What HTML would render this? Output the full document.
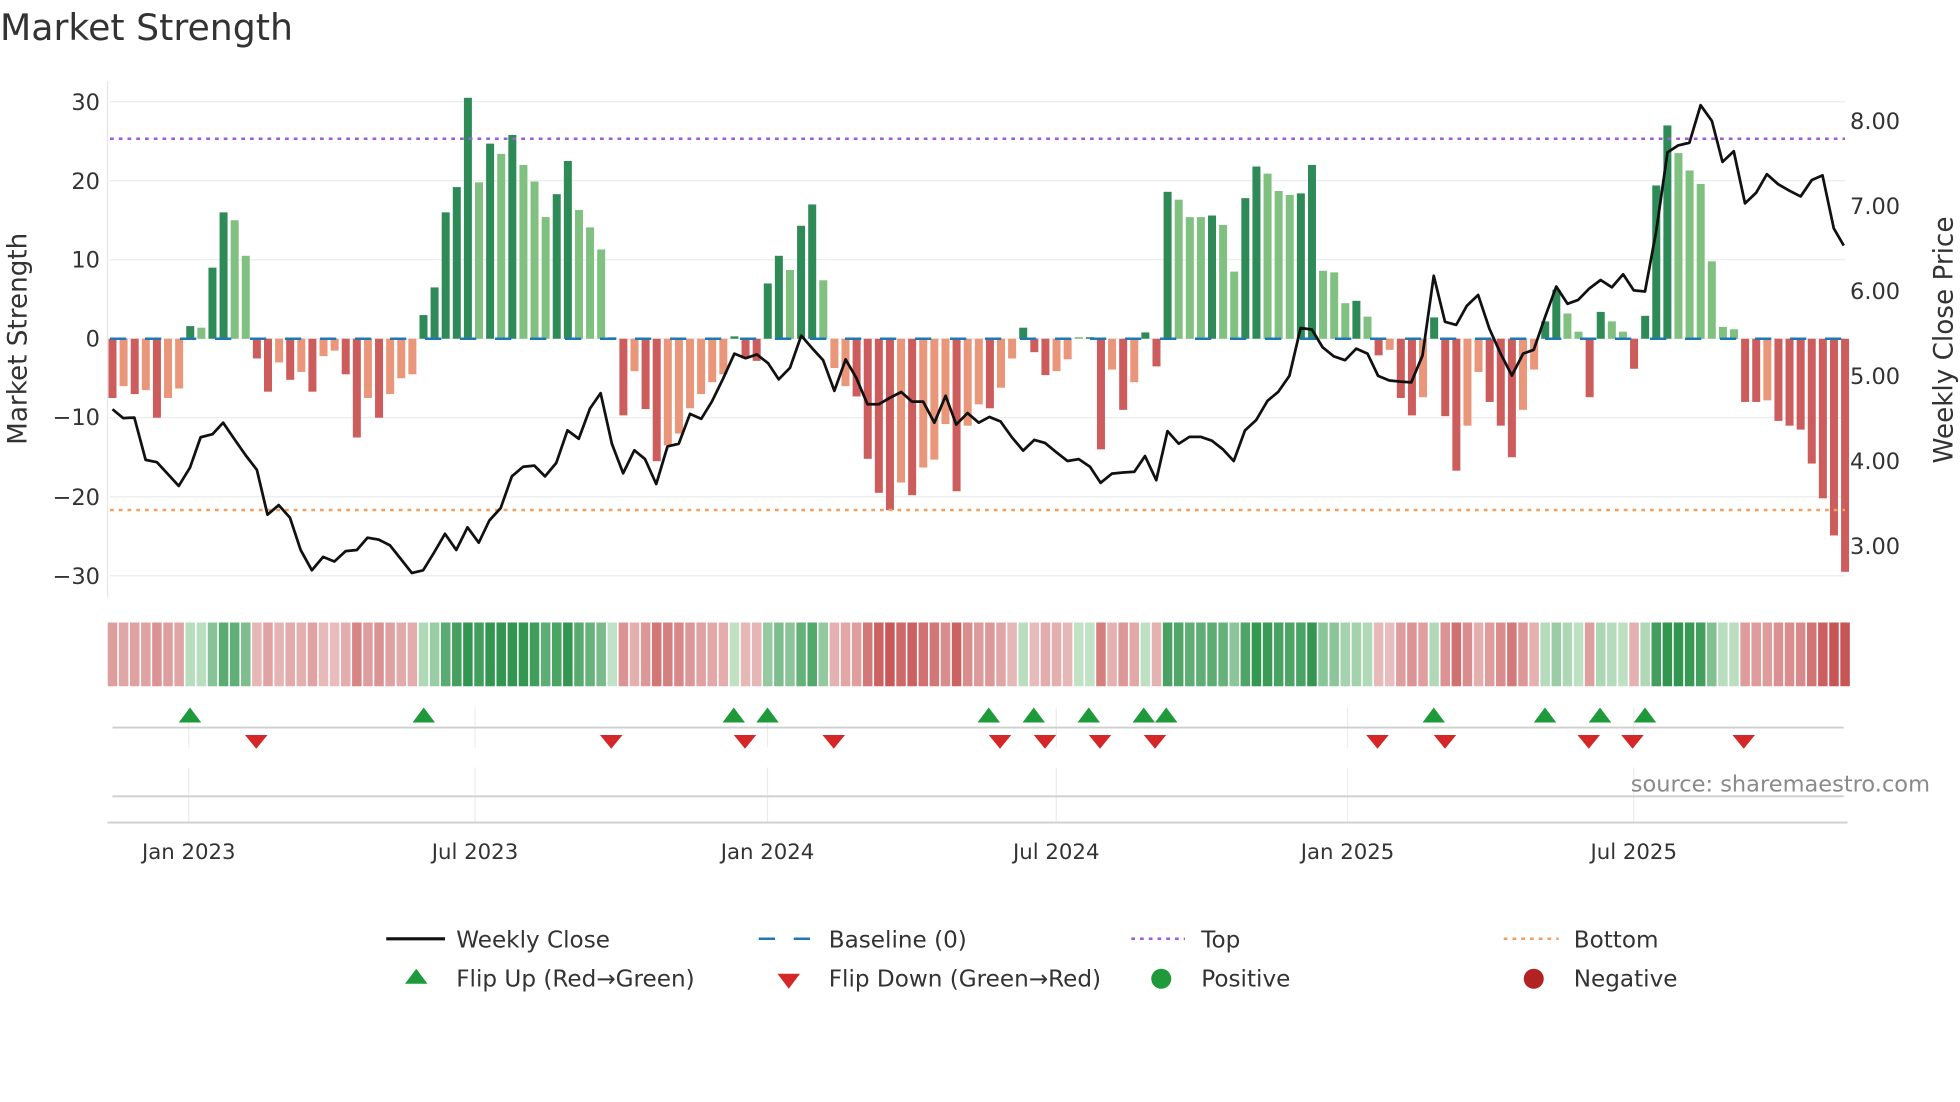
<!DOCTYPE html>
<html><head><meta charset="utf-8"><style>
html,body{margin:0;padding:0;background:#fff;}
svg{display:block;}
text{font-family:"DejaVu Sans","Liberation Sans",sans-serif;fill:#333;}
</style></head><body>
<svg id="s" width="1960" height="1102" viewBox="0 0 1568 881.6" xmlns="http://www.w3.org/2000/svg">
<text x="0" y="32" style="font-size:29px;fill:#333">Market Strength</text>
<g id="grid"></g>
<line x1="86" y1="65" x2="86" y2="478" stroke="#e6e6e6"/>
<g id="bars"></g>
<line x1="88" y1="111" x2="1476" y2="111" stroke="#9a5fd6" stroke-width="2" stroke-dasharray="3,4"/>
<line x1="88" y1="408" x2="1476" y2="408" stroke="#f0a060" stroke-width="2" stroke-dasharray="3,4"/>
<line x1="88" y1="271" x2="1476" y2="271" stroke="#1f77b4" stroke-width="2" stroke-dasharray="13,15"/>
<polyline id="price" fill="none" stroke="#111" stroke-width="2.2" stroke-linejoin="round"/>
<g id="heat"></g>
<g id="marks"></g>
<text x="1544" y="633" text-anchor="end" style="font-size:18px;fill:#8a8a8a">source: sharemaestro.com</text>
<g style="font-size:18px">
<text x="80" y="88" text-anchor="end">30</text>
<text x="80" y="151" text-anchor="end">20</text>
<text x="80" y="214" text-anchor="end">10</text>
<text x="80" y="277" text-anchor="end">0</text>
<text x="80" y="340" text-anchor="end">−10</text>
<text x="80" y="404" text-anchor="end">−20</text>
<text x="80" y="467" text-anchor="end">−30</text>
<text x="1480" y="103">8.00</text>
<text x="1480" y="171">7.00</text>
<text x="1480" y="239">6.00</text>
<text x="1480" y="307">5.00</text>
<text x="1480" y="375">4.00</text>
<text x="1480" y="443">3.00</text>
</g>
<text transform="translate(21,271) rotate(-90)" text-anchor="middle" style="font-size:21px">Market Strength</text>
<text transform="translate(1562,272) rotate(-90)" text-anchor="middle" style="font-size:21px">Weekly Close Price</text>
<g style="font-size:17px" text-anchor="middle">
<text x="151" y="687">Jan 2023</text><text x="380" y="687">Jul 2023</text><text x="614" y="687">Jan 2024</text>
<text x="845" y="687">Jul 2024</text><text x="1078" y="687">Jan 2025</text><text x="1307" y="687">Jul 2025</text>
</g>
<g style="font-size:18.5px">
<line x1="309" y1="751" x2="356" y2="751" stroke="#111" stroke-width="2.5"/><text x="365" y="758">Weekly Close</text>
<line x1="607" y1="751" x2="651" y2="751" stroke="#1f77b4" stroke-width="2" stroke-dasharray="13,15"/><text x="663" y="758">Baseline (0)</text>
<line x1="905" y1="751" x2="948" y2="751" stroke="#9a5fd6" stroke-width="2" stroke-dasharray="3,4"/><text x="961" y="758">Top</text>
<line x1="1203" y1="751" x2="1247" y2="751" stroke="#f0a060" stroke-width="2" stroke-dasharray="3,4"/><text x="1259" y="758">Bottom</text>
<polygon points="324,787 342,787 333,775" fill="#1e9a3a"/><text x="365" y="789">Flip Up (Red→Green)</text>
<polygon points="622,779 640,779 631,791" fill="#d62728"/><text x="663" y="789">Flip Down (Green→Red)</text>
<circle cx="929" cy="783" r="8" fill="#1e9a3a"/><text x="961" y="789">Positive</text>
<circle cx="1227" cy="783" r="8" fill="#b22222"/><text x="1259" y="789">Negative</text>
</g>
</svg>
<script>
var NS="http://www.w3.org/2000/svg";
function el(p,t,a){var e=document.createElementNS(NS,t);for(var k in a)e.setAttribute(k,a[k]);p.appendChild(e);return e;}
var g=document.getElementById('grid');
[30,20,10,0,-10,-20,-30].forEach(function(v){var y=271-v*6.32;el(g,'line',{x1:88,x2:1476,y1:y,y2:y,stroke:'#ececec','stroke-width':1});});
[151,380,614,845,1078,1307].forEach(function(x){el(g,'line',{x1:x,x2:x,y1:566,y2:598,stroke:'#ececec'});el(g,'line',{x1:x,x2:x,y1:614,y2:658,stroke:'#ececec'});});
el(g,'line',{x1:90,x2:1475,y1:582,y2:582,stroke:'#cfcfcf','stroke-width':1.5});
el(g,'line',{x1:90,x2:1475,y1:637,y2:637,stroke:'#cfcfcf','stroke-width':1.5});
el(g,'line',{x1:86,x2:1478,y1:658,y2:658,stroke:'#cfcfcf','stroke-width':1.5});
var D=[[-7.5,1],[-6,0],[-7,1],[-6.5,0],[-10,1],[-7.5,0],[-6.3,0],[1.6,1],[1.4,0],[9,1],[16,1],[15,0],[10.5,0],[-2.5,1],[-6.7,1],[-3,0],[-5.2,1],[-4.2,0],[-6.7,1],[-2.2,0],[-1.5,0],[-4.5,1],[-12.5,1],[-7.5,0],[-10,1],[-7,0],[-5,0],[-4.5,0],[3,1],[6.5,1],[16,1],[19.2,1],[30.5,1],[19.8,0],[24.7,1],[23.4,0],[25.8,1],[22,0],[19.9,0],[15.4,0],[18.3,1],[22.5,1],[16.3,0],[14.1,0],[11.3,0],[0.2,0],[-9.7,1],[-4.1,0],[-8.9,1],[-15.5,1],[-13.5,0],[-12,0],[-8.8,0],[-7,0],[-5.5,0],[-4.5,0],[0.3,1],[-2.5,1],[-2.8,1],[7,1],[10.5,1],[8.7,0],[14.3,1],[17,1],[7.4,0],[-3.7,0],[-6,0],[-7.3,1],[-15.2,1],[-19.5,1],[-21.7,1],[-18.2,0],[-19.8,1],[-16.3,0],[-15.3,0],[-10.8,0],[-19.3,1],[-11,0],[-8.3,0],
[-8.8,1],[-6.2,0],[-2.5,0],[1.4,1],[-1.7,1],[-4.6,1],[-4.1,0],[-2.6,0],[0.2,0],[0.2,1],[-14,1],[-3.9,0],[-9,1],[-5.5,0],[0.8,1],[-3.5,1],[18.6,1],[17.6,0],[15.4,0],[15.4,0],[15.6,1],[14.4,0],[8.5,0],[17.8,1],[21.8,1],[20.9,0],[18.7,0],[18.2,0],[18.4,1],[22,1],[8.6,0],[8.4,0],[4.5,0],[4.8,1],[2.8,0],[-2.1,1],[-1.4,0],[-7.5,1],[-9.7,1],[-7.4,0],[2.7,1],[-9.8,1],[-16.7,1],[-11,0],[-4.2,0],[-8,1],[-11,1],[-15,1],[-9,0],[-3.9,0],[2.2,1],[6.2,1],[3.2,0],[0.9,0],[-7.4,1],[3.4,1],[2.2,0],[0.9,0],[-3.8,1],[2.9,1],[19.4,1],[27,1],[23.5,0],[21.3,0],[19.6,0],[9.8,0],[1.5,0],[1.2,0],[-8,1],[-8,1],[-7.8,0],[-10.4,1],[-11,1],[-11.5,1],[-15.8,1],[-20.2,1],[-24.9,1],[-29.5,1]];
var b=document.getElementById('bars'),h=document.getElementById('heat');
function mix(a,c,t){return 'rgb('+a.map(function(v,i){return Math.round(v+(c[i]-v)*t);}).join(',')+')';}
D.forEach(function(d,i){var x=90+8.885*i,v=d[0],y=271-v*6.32;
 var col=v>=0?(d[1]?'#2e8b57':'#80c080'):(d[1]?'#cd5c5c':'#e9967a');
 el(b,'rect',{x:x-3.2,y:Math.min(y,271),width:6.4,height:Math.max(0.5,Math.abs(271-y)),fill:col});
 var t=Math.min(1,0.15+Math.abs(v)/26);
 var hc=v>=0?mix([220,240,220],[50,150,80],t):mix([240,215,215],[200,85,85],t);
 el(h,'rect',{x:x-3.8,y:498,width:7.6,height:51,fill:hc});
});
function Y(z){return 82+(z-270)/3.26;}
var P=[[180,1070],[197,1093],[215,1092],[233,1202],[251,1208],[268,1238],[286,1270],[304,1222],[321,1143],[340,1135],[357,1105],[375,1148],[393,1190],[411,1228],[428,1345],[446,1320],[464,1353],[481,1437],[499,1490],[517,1455],[535,1467],[553,1440],[571,1437],[588,1405],[606,1410],[624,1425],[641,1460],[659,1497],[677,1490],[694,1445],[712,1395],[730,1437],[748,1378],[766,1418],[783,1360],[801,1328],[819,1245],[837,1220],[855,1217],[872,1245],[890,1210],[908,1125],[926,1147],[944,1068],[961,1028],[979,1160],[997,1237],[1015,1177],[1032,1200],[1050,1265],[1068,1167],[1086,1160],[1104,1082],[1122,1095],[1139,1050],[1157,990],[1175,925],[1193,937],[1211,927],[1229,950],[1246,992],[1264,962],[1282,878],[1299,910],[1317,942],[1335,1022],[1353,940],[1370,988],[1388,1057],[1406,1057],[1424,1040],[1442,1025],[1459,1050],[1477,1050],[1495,1105],[1513,1035],[1530,1110],[1548,1080],[1566,1105]];
var Q=[[15,1090],[33,1102],[51,1143],[69,1178],[87,1150],[104,1158],[122,1182],[140,1205],[158,1200],[176,1220],[193,1262],[211,1238],[229,1235],[247,1233],[264,1192],[282,1255],[300,1127],[318,1160],[335,1142],[353,1142],[371,1152],[389,1175],[406,1205],[424,1125],[442,1098],[460,1048],[477,1025],[495,983],[513,858],[531,862],[548,908],[566,932],[584,942],[602,912],[620,925],[637,983],[655,995],[673,998],[690,1000],[708,930],[726,722],[744,842],[762,850],[779,800],[797,772],[815,860],[833,925],[851,982],[869,925],[886,915],[904,830],[922,750],[940,795],[957,785],[975,755],[993,733],[1011,752],[1029,718],[1046,760],[1064,763],[1082,605],[1100,400],[1117,382],[1135,375],[1153,277],[1171,318],[1188,425],[1206,397],[1224,533],[1242,505],[1259,457],[1277,483],[1295,500],[1313,515],[1331,472],[1348,460],[1366,598],[1382,643]];
var pts=P.map(function(p){return (p[0]/2)+','+Y(p[1]);}).concat(Q.map(function(p){return (784+p[0]/2)+','+Y(p[1]);}));
document.getElementById('price').setAttribute('points',pts.join(' '));
var m=document.getElementById('marks');
[152,339,587,614,791,827,871,915,933,1147,1236,1280,1316].forEach(function(x){el(m,'polygon',{points:(x-9)+',578 '+(x+9)+',578 '+x+',566',fill:'#1e9a3a'});});
[205,489,596,667,800,836,880,924,1102,1156,1271,1306,1395].forEach(function(x){el(m,'polygon',{points:(x-9)+',588 '+(x+9)+',588 '+x+',599',fill:'#d62728'});});
</script>
</body></html>
